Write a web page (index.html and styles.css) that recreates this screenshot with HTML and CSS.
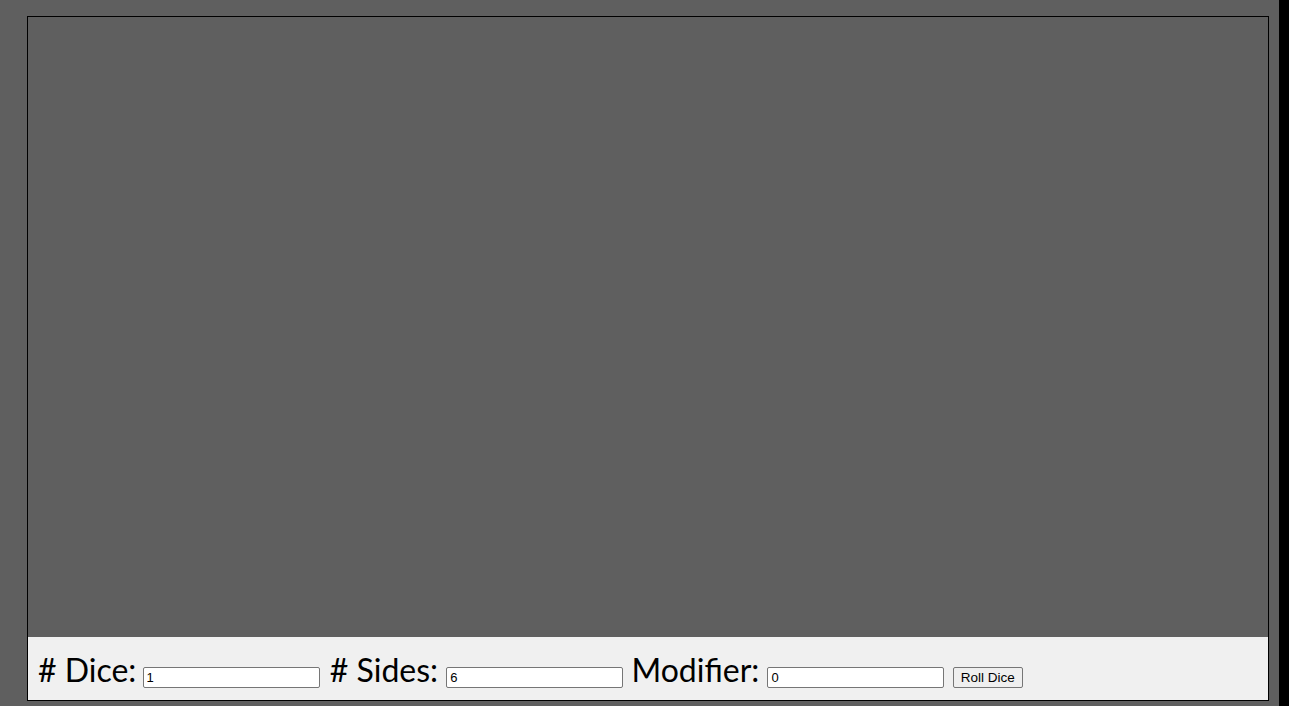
FILE: index.html
```html
<!DOCTYPE html>
<html lang="en">
<head>
<meta charset="utf-8">
<title>Dice Roller</title>
<link rel="stylesheet" href="styles.css">
</head>
<body>
<div class="page">
  <main class="main">
    <div class="frame">
      <div class="canvas"></div>
      <div class="controls">
        <label class="field"># Dice: <input class="num" type="text" value="1"></label>
        <label class="field"># Sides: <input class="num" type="text" value="6"></label>
        <label class="field">Modifier: <input class="num" type="text" value="0"></label>
        <button class="roll" type="button">Roll Dice</button>
      </div>
    </div>
  </main>
  <div class="strip"></div>
</div>
</body>
</html>
```
FILE: styles.css
```css
html, body {
  margin: 0;
  padding: 0;
  height: 100%;
}
body {
  background: #5f5f5f;
  overflow: hidden;
}
.page {
  display: flex;
  height: 706px;
}
.main {
  flex: 1;
  padding: 16px 10px 5px 27px;
  display: flex;
}
.strip {
  width: 10px;
  background: #000;
}
.frame {
  flex: 1;
  border: 1px solid #000;
  display: flex;
  flex-direction: column;
}
.canvas {
  height: 620px;
  background: #5f5f5f;
}
.controls {
  flex: 1;
  background: #f0f0f0;
  padding: 13px 0 0 10px;
  font-family: "Lato", "Open Sans", sans-serif;
  font-size: 32px;
  line-height: 40px;
  color: #000;
  white-space: nowrap;
}
.num {
  box-sizing: border-box;
  width: 177px;
  height: 21px;
  border: 1px solid #767676;
  border-radius: 2px;
  padding: 1px 3px;
  font-family: "Liberation Sans", Arial, sans-serif;
  font-size: 13px;
  background: #fff;
  color: #000;
  vertical-align: baseline;
}
.field:first-child .num {
  margin-left: -2px;
  margin-right: 2px;
}
.roll {
  box-sizing: border-box;
  height: 21px;
  padding: 1px 7px;
  border: 1px solid #767676;
  border-radius: 2px;
  background: #efefef;
  font-family: "Liberation Sans", Arial, sans-serif;
  font-size: 13.5px;
  color: #000;
  margin-left: 0;
}
```
